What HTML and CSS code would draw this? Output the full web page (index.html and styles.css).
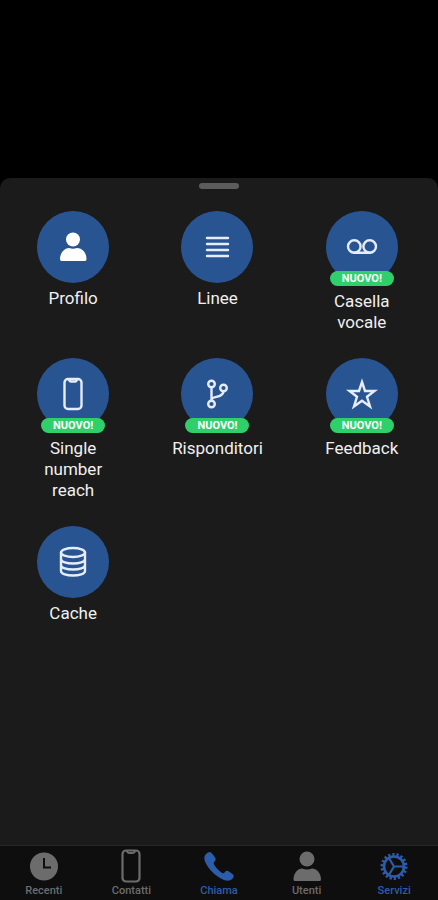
FILE: index.html
```html
<!DOCTYPE html>
<html lang="it">
<head>
    <meta charset="UTF-8">
    <meta name="viewport" content="width=device-width, initial-scale=1.0">
    <title>Servizi</title>
    <link rel="stylesheet" href="styles.css">
</head>
<body>
    <main class="sheet">
        <div class="handle"></div>
        <div class="services">
            <button class="service" type="button">
                <span class="circle">
                    <svg class="icon solid" viewBox="0 0 36 36"><circle cx="18" cy="10.500" r="7"/><path d="M5 30C5 23.500 10 19 14 19Q18 20.500 22 19C27 19 31.500 23.500 31.500 30Q31.500 32 30 32H6.500Q5 32 5 30Z"/></svg>
                </span>
                <span class="label">Profilo</span>
            </button>
            <button class="service" type="button">
                <span class="circle">
                    <svg class="icon" viewBox="0 0 36 36"><path d="M8 9h21M8 15h21M8 21h21M8 27h21"/></svg>
                </span>
                <span class="label">Linee</span>
            </button>
            <button class="service" type="button">
                <span class="circle">
                    <svg class="icon" viewBox="0 0 36 36"><circle cx="10.300" cy="17.500" r="6.300"/><circle cx="25.700" cy="17.500" r="6.300"/><path d="M10.300 23.800h15.400"/></svg>
                </span>
                <span class="badge">NUOVO!</span>
                <span class="label">Casella vocale</span>
            </button>
            <button class="service" type="button">
                <span class="circle">
                    <svg class="icon" viewBox="0 0 36 36"><rect x="9.500" y="3" width="17" height="30" rx="3.500"/><path d="M14 3.500q.5 2 2 2h4q1.500 0 2-2"/></svg>
                </span>
                <span class="badge">NUOVO!</span>
                <span class="label">Single number reach</span>
            </button>
            <button class="service" type="button">
                <span class="circle">
                    <svg class="icon" viewBox="0 0 36 36"><circle cx="12.500" cy="8" r="3.300"/><circle cx="24.500" cy="12" r="3.300"/><circle cx="12.500" cy="28" r="3.300"/><path d="M12.500 11.500v13M12.500 24c0-5 11-1 12-8.500"/></svg>
                </span>
                <span class="badge">NUOVO!</span>
                <span class="label">Risponditori</span>
            </button>
            <button class="service" type="button">
                <span class="circle">
                    <svg class="icon star" viewBox="0 0 36 36"><path d="M18 6L21 15H30.500L23 20.800L26 30.500L18 24.800L10 30.500L13 20.800L5.500 15H15Z"/></svg>
                </span>
                <span class="badge">NUOVO!</span>
                <span class="label">Feedback</span>
            </button>
            <button class="service" type="button">
                <span class="circle">
                    <svg class="icon" viewBox="0 0 36 36"><ellipse cx="18" cy="8.500" rx="12" ry="4.500"/><path d="M6 8.500V27c0 6 24 6 24 0V8.500M6 15c0 6 24 6 24 0M6 21c0 6 24 6 24 0"/></svg>
                </span>
                <span class="label">Cache</span>
            </button>
        </div>
    </main>

    <nav class="tabs">
        <a class="tab" href="#recenti">
            <svg class="tab-icon" viewBox="0 0 34 34"><circle cx="17" cy="17.500" r="14" fill="currentColor"/><path class="hands" d="M17 9v9.500h7"/></svg>
            Recenti
        </a>
        <a class="tab" href="#contatti">
            <svg class="tab-icon outline" viewBox="0 0 34 34"><rect x="8.500" y="1.500" width="17" height="31" rx="3.500"/><path d="M13 2q.5 2 2 2h4q1.500 0 2-2"/></svg>
            Contatti
        </a>
        <a class="tab active" href="#chiama">
            <svg class="tab-icon" viewBox="0 0 34 34"><path fill="currentColor" d="M3.500 5.500Q5.500 3 7.500 3Q9 3 10.500 5L13 8.500Q14.500 11 12.500 12.500Q11 14 12 15.500C14 19 17 22 20 24Q21.500 25 23 23Q24.500 21 27 22.500L31 25.500Q32.500 27 31 29C28 33 23 32 18 29C11 25 4.500 17.500 2.500 11Q1.500 8 3.500 5.500Z"/></svg>
            Chiama
        </a>
        <a class="tab" href="#utenti">
            <svg class="tab-icon" viewBox="0 0 34 34"><g fill="currentColor"><circle cx="17" cy="10" r="7.500"/><path d="M3.500 30.500C3.500 24 8 19.500 12 19.500Q17 21.500 22 19.500C26.500 19.500 31 24 31 30.500Q31 32 29.500 32H5Q3.500 32 3.500 30.500Z"/></g></svg>
            Utenti
        </a>
        <a class="tab active" href="#servizi">
            <svg class="tab-icon outline" viewBox="0 0 34 34"><circle class="rim" cx="17" cy="17.500" r="10"/><circle class="teeth" cx="17" cy="17.500" r="12"/><path d="M17 17.500h9.500M17 17.500L12 9.300M17 17.500L12 25.700"/></svg>
            Servizi
        </a>
    </nav>
</body>
</html>
```

FILE: styles.css
```css
* {
    box-sizing: border-box;
}
body {
    margin: 0;
    min-height: 100vh;
    display: flex;
    flex-direction: column;
    background-color: #000;
    color: #f0f0f0;
    font-family: Roboto, Arial, sans-serif;
}
.sheet {
    flex: 1;
    margin-top: 178px;
    padding: 5px 0 24px;
    background-color: #1b1b1b;
    border-radius: 10px 10px 0 0;
}
.handle {
    width: 40px;
    height: 6px;
    margin: 0 auto 22px;
    border-radius: 3px;
    background-color: #5c5c5c;
}
.services {
    display: grid;
    grid-template-columns: repeat(3, 1fr);
    row-gap: 25px;
    padding: 0 4px 0 1px;
}
.service {
    display: flex;
    flex-direction: column;
    align-items: center;
    padding: 0;
    border: none;
    background: none;
    color: inherit;
    font: inherit;
    cursor: pointer;
}
.circle {
    display: flex;
    align-items: center;
    justify-content: center;
    width: 72px;
    height: 72px;
    border-radius: 50%;
    background-color: #285592;
}
.icon {
    width: 36px;
    height: 36px;
    fill: none;
    stroke: #e6ecfa;
    stroke-width: 2.4;
    stroke-linecap: round;
    stroke-linejoin: round;
}
.icon.solid {
    fill: #fff;
    stroke: none;
}
.icon.star {
    stroke-linejoin: miter;
}
.badge {
    width: 64px;
    height: 15px;
    margin-top: -12px;
    border-radius: 8px;
    background-color: #2fd06c;
    color: #fff;
    font-size: 11px;
    font-weight: 700;
    line-height: 15px;
}
.label {
    max-width: 100px;
    margin-top: 5px;
    font-size: 17px;
    line-height: 21px;
    text-align: center;
}
.tabs {
    display: grid;
    grid-template-columns: repeat(5, 1fr);
    padding: 3px 0;
    border-top: 1px solid #262626;
    background-color: #0e0e0e;
}
.tab {
    display: flex;
    flex-direction: column;
    align-items: center;
    gap: 2px;
    color: #6c6c6c;
    font-size: 11px;
    font-weight: 500;
    line-height: 12px;
    text-decoration: none;
}
.tab.active {
    color: #2c5dab;
}
.tab-icon {
    width: 34px;
    height: 34px;
}
.outline {
    fill: none;
    stroke: currentColor;
    stroke-width: 2.2;
}
.hands {
    fill: none;
    stroke: #0e0e0e;
    stroke-width: 2;
}
.rim {
    stroke-width: 2.6;
}
.teeth {
    stroke-width: 3;
    stroke-dasharray: 2.2 1.99;
}
```
